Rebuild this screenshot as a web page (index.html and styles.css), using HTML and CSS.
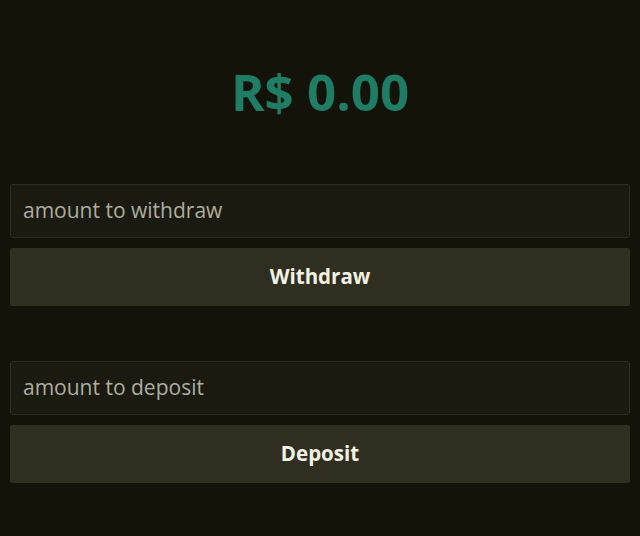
FILE: index.html
```html
<!DOCTYPE html>
<html>
<head>
<meta charset="utf-8">
<link rel="stylesheet" href="styles.css">
</head>
<body>
<main class="wallet">
  <h1 class="balance">R$ 0.00</h1>
  <section class="form">
    <input class="field" type="text" placeholder="amount to withdraw">
    <button class="btn">Withdraw</button>
  </section>
  <section class="form">
    <input class="field" type="text" placeholder="amount to deposit">
    <button class="btn">Deposit</button>
  </section>
</main>
</body>
</html>
```

FILE: styles.css
```css
html, body {
  margin: 0;
  padding: 0;
  background: #131309;
  height: 100%;
}
body {
  font-family: "Open Sans", sans-serif;
}
.wallet {
  display: flex;
  flex-direction: column;
  padding: 0 10px;
}
.balance {
  margin: 60px 0 0;
  height: 62px;
  line-height: 62px;
  text-align: center;
  font-size: 51px;
  font-weight: 700;
  color: #1f7d66;
}
.form {
  display: flex;
  flex-direction: column;
  gap: 10px;
  margin-top: 62px;
}
.form + .form {
  margin-top: 55px;
}
.field {
  box-sizing: border-box;
  height: 54px;
  padding: 0 12px 2px;
  background: #1a1a10;
  border: 1px solid #2c2c20;
  border-radius: 3px;
  font-family: "Open Sans", sans-serif;
  font-size: 21px;
  color: #b8b8a8;
  outline: none;
}
.field::placeholder {
  color: #aeada0;
}
.btn {
  height: 58px;
  padding: 0 0 3px;
  background: #302e20;
  border: none;
  border-radius: 2px;
  font-family: "Open Sans", sans-serif;
  font-size: 20.5px;
  font-weight: 700;
  color: #f2f2e4;
}
```
